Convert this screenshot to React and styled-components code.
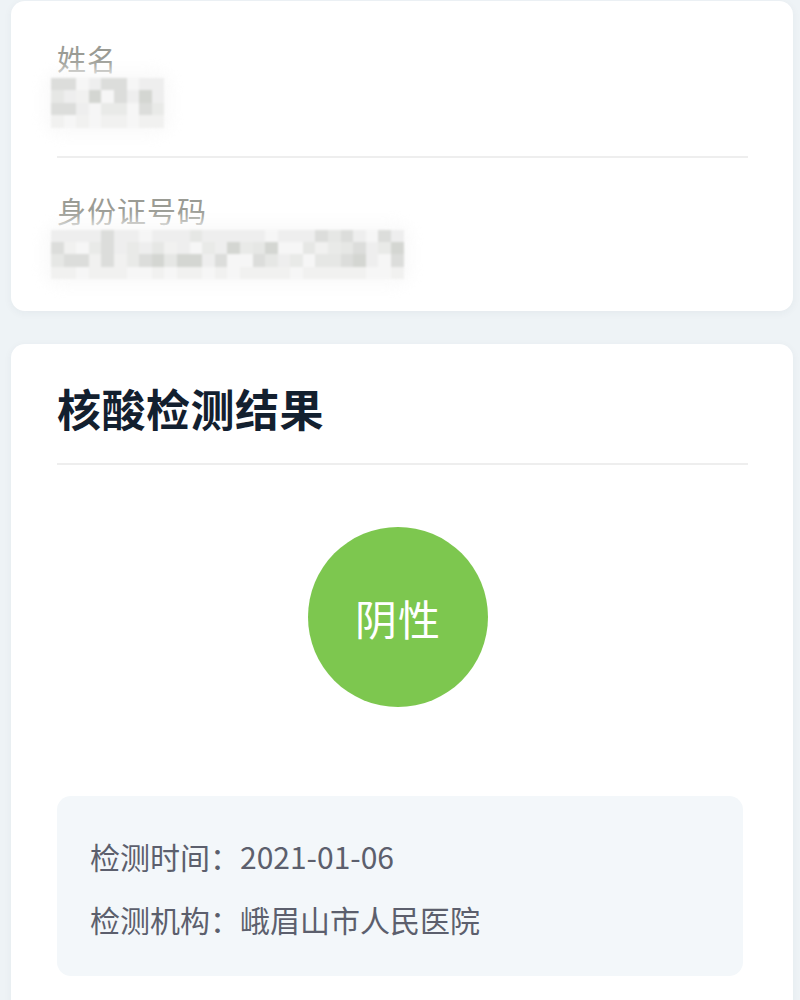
import React from "react"
import styled, { createGlobalStyle } from "styled-components"

const GlobalStyle = createGlobalStyle`
    html, body {
        margin: 0;
        padding: 0;
        background: #eef3f6;
    }
    body {
        font-family: "Noto Sans CJK SC", "Noto Sans", sans-serif;
    }
`
const Page = styled.div`
    display: flex;
    flex-direction: column;
    gap: 33px;
    padding: 1px 7px 0 11px;
    height: 1000px;
    overflow: hidden;
    box-sizing: border-box;
`
const Card = styled.div`
    background: #ffffff;
    border-radius: 14px;
    box-shadow: 0 2px 8px rgba(40, 60, 80, 0.05);
    padding: 0 45px ${(p) => p.$bottom || "0"} 46px;
    flex-shrink: 0;
`
const Field = styled.div`
    padding: ${(p) => p.$pad};
    border-bottom: ${(p) => (p.$last ? "none" : "2px solid #eeeeee")};
`
const Label = styled.div`
    font-size: 29px;
    line-height: 40px;
    color: #9a9b94;
    letter-spacing: 1px;
`
const Mosaic = styled.div`
    display: grid;
    grid-template-columns: repeat(${(p) => p.$cols}, 12.6px);
    grid-auto-rows: 12.4px;
    margin-left: -6px;
    filter: blur(1.2px);
    border-radius: 10px;
    box-shadow: 0 0 14px 8px rgba(250, 250, 250, 0.9);
    width: fit-content;
`
const Cell = styled.div`
    background: ${(p) => p.$c};
`
const Title = styled.h2`
    margin: 0;
    padding: 37px 0 28px;
    font-size: 44px;
    line-height: 54px;
    font-weight: 700;
    color: #13202f;
    letter-spacing: 0.5px;
    border-bottom: 2px solid #eeeeee;
`
const ResultArea = styled.div`
    display: flex;
    justify-content: center;
    padding: 62px 9px 89px 0;
`
const Badge = styled.div`
    width: 180px;
    height: 180px;
    border-radius: 50%;
    background: #7dc74f;
    color: #ffffff;
    display: flex;
    align-items: center;
    justify-content: center;
    font-size: 42px;
    font-weight: 400;
    letter-spacing: 1px;
`
const InfoBox = styled.div`
    background: #f3f7fa;
    border-radius: 14px;
    padding: 40px 34px 36px 33px;
    margin-right: 5px;
    display: flex;
    flex-direction: column;
    gap: 22px;
`
const InfoRow = styled.div`
    font-size: 30px;
    line-height: 41px;
    color: #5c5f6d;
`

const shades = ["#f6f6f6", "#eeeeee", "#e6e7e5", "#dcdddb", "#d4d6d2", "#f1f1f0", "#e9eae8"]

const makeCells = (cols, rows, seed) => {
    const out = []
    let s = seed
    for (let r = 0; r < rows; r++) {
        for (let c = 0; c < cols; c++) {
            s = (s * 9301 + 49297) % 233280
            let idx = Math.floor((s / 233280) * shades.length)
            if (r === rows - 1) idx = idx % 2 === 0 ? 0 : 5
            if (r === 0 && idx > 3) idx = 1
            out.push(shades[idx])
        }
    }
    return out
}

const BlurredText = ({ cols, rows, seed }) => (
    <Mosaic $cols={cols}>
        {makeCells(cols, rows, seed).map((c, i) => (
            <Cell key={i} $c={c} />
        ))}
    </Mosaic>
)

export default function App() {
    return (
        <>
            <GlobalStyle />
            <Page>
                <Card>
                    <Field $pad="37px 0 28px">
                        <Label>姓名</Label>
                        <BlurredText cols={9} rows={4} seed={7} />
                    </Field>
                    <Field $last $pad="32px 0 32px">
                        <Label>身份证号码</Label>
                        <BlurredText cols={28} rows={4} seed={42} />
                    </Field>
                </Card>
                <Card $bottom="60px">
                    <Title>核酸检测结果</Title>
                    <ResultArea>
                        <Badge>阴性</Badge>
                    </ResultArea>
                    <InfoBox>
                        <InfoRow>检测时间：2021-01-06</InfoRow>
                        <InfoRow>检测机构：峨眉山市人民医院</InfoRow>
                    </InfoBox>
                </Card>
            </Page>
        </>
    )
}
